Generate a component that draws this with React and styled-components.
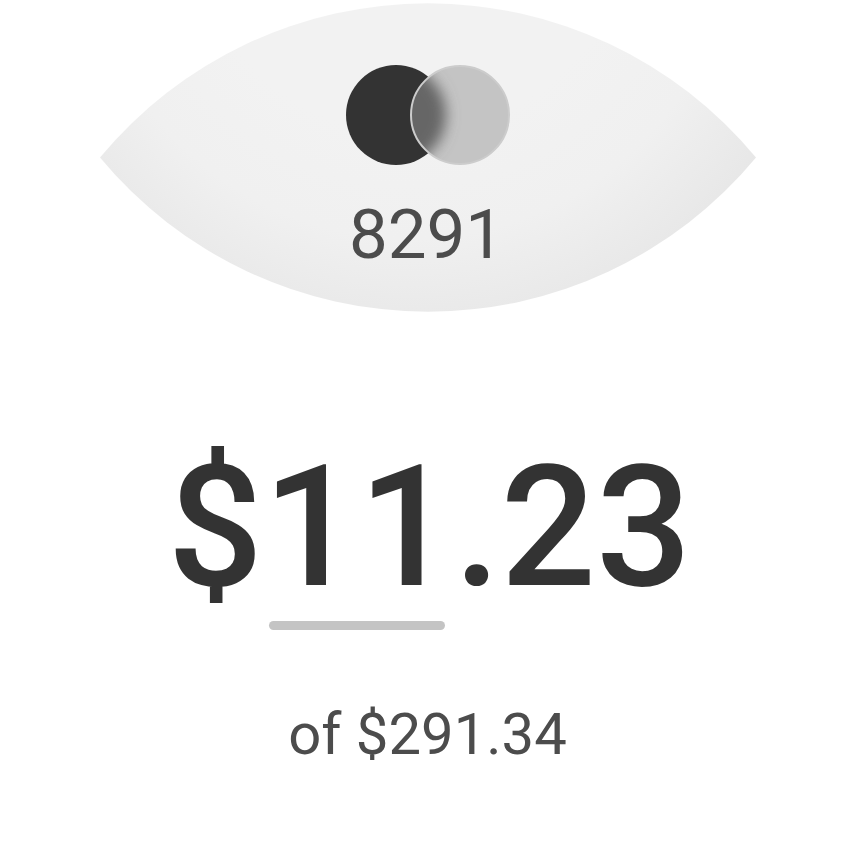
import React from "react";
import styled, { createGlobalStyle } from "styled-components";

const GlobalStyle = createGlobalStyle`
  * { box-sizing: border-box; }
  body { margin: 0; background: #ffffff; font-family: Roboto, "Liberation Sans", sans-serif; }
`;

const Page = styled.main`
  display: flex;
  flex-direction: column;
  align-items: center;
  min-height: 100vh;
  padding-top: 3px;
  overflow: hidden;
`;

const CardSummary = styled.section`
  display: grid;
  justify-items: center;
  width: 656px;
  max-width: 100%;
`;

const EyeShape = styled.svg`
  grid-area: 1 / 1;
  width: 100%;
  height: auto;
`;

const CardDetails = styled.div`
  grid-area: 1 / 1;
  z-index: 1;
  display: flex;
  flex-direction: column;
  align-items: center;
  padding-top: 60px;
`;

const CardLogo = styled.svg`
  width: 168px;
  height: 104px;
`;

const CardNumber = styled.span`
  margin-top: 26px;
  padding-right: 2px;
  font-size: 69px;
  line-height: 84px;
  color: #4c4c4c;
`;

const Amount = styled.h1`
  margin: 116px 0 0;
  padding-left: 4px;
  font-size: 168px;
  font-weight: 500;
  line-height: 200px;
  color: #333333;
`;

const Underline = styled.div`
  width: 176px;
  height: 9px;
  margin-top: -7px;
  margin-right: 142px;
  border-radius: 5px;
  background: #c4c4c4;
`;

const Total = styled.p`
  margin: 68px 0 0;
  font-size: 58px;
  line-height: 72px;
  color: #4c4c4c;
`;

export default function App() {
  return (
    <>
      <GlobalStyle />
      <Page>
        <CardSummary>
          <EyeShape viewBox="0 0 656 309" aria-hidden="true">
            <defs>
              <radialGradient id="eye-shade" gradientUnits="userSpaceOnUse" cx="310" cy="-90" r="440">
                <stop offset="0.500" stopColor="#f2f2f2" />
                <stop offset="0.740" stopColor="#f0f0f0" />
                <stop offset="1" stopColor="#e6e6e6" />
              </radialGradient>
            </defs>
            <path d="M0 154.500A426 426 0 0 1 656 154.500A426 426 0 0 1 0 154.500Z" fill="url(#eye-shade)" />
          </EyeShape>
          <CardDetails>
            <CardLogo viewBox="0 0 168 104" role="img" aria-label="Card">
              <defs>
                <clipPath id="front-circle"><circle cx="116" cy="52" r="49" /></clipPath>
                <filter id="soften" x="-50%" y="-50%" width="200%" height="200%"><feGaussianBlur stdDeviation="7" /></filter>
              </defs>
              <circle cx="52" cy="52" r="50" fill="#333333" />
              <circle cx="116" cy="52" r="49" fill="#c4c4c4" />
              <g clipPath="url(#front-circle)">
                <circle cx="52" cy="52" r="50" fill="#666666" filter="url(#soften)" />
              </g>
              <circle cx="116" cy="52" r="49" fill="none" stroke="#cccccc" strokeWidth="2" />
            </CardLogo>
            <CardNumber>8291</CardNumber>
          </CardDetails>
        </CardSummary>
        <Amount>$11.23</Amount>
        <Underline />
        <Total>of $291.34</Total>
      </Page>
    </>
  );
}
